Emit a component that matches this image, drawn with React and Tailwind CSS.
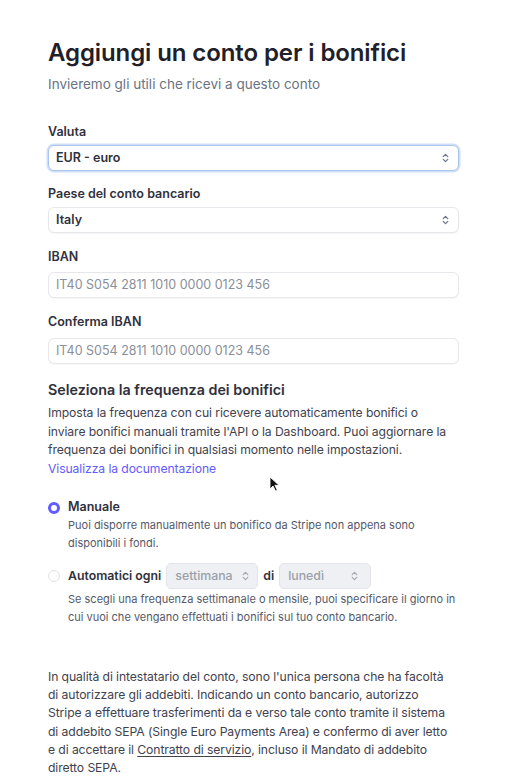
import React from "react";

function Chevrons({ className = "" }) {
  return (
    <svg width="7" height="10" viewBox="0 0 7 10" fill="none" className={className}>
      <path d="M1.2 3.6 L3.5 1.3 L5.8 3.6" stroke="currentColor" strokeWidth="1.2" strokeLinecap="round" strokeLinejoin="round" />
      <path d="M1.2 6.4 L3.5 8.7 L5.8 6.4" stroke="currentColor" strokeWidth="1.2" strokeLinecap="round" strokeLinejoin="round" />
    </svg>
  );
}

function Label({ children, className = "" }) {
  return <div className={"text-[12.5px] font-semibold text-[#30313d] leading-[16px] " + className}>{children}</div>;
}

function Select({ value, focused }) {
  return (
    <div
      className={
        "mt-[5px] h-[26px] rounded-[6px] bg-white flex items-center justify-between pl-[7px] pr-[9px] " +
        (focused
          ? "border border-[#a9c6ef] shadow-[0_0_0_1.5px_#cfdff6]"
          : "border border-[#e6e6eb] shadow-[0_1px_1px_rgba(0,0,0,0.04)]")
      }
    >
      <span className="text-[12.5px] font-semibold text-[#30313d]">{value}</span>
      <Chevrons className="text-[#6a7383]" />
    </div>
  );
}

function Input({ placeholder, className = "" }) {
  return (
    <div className={"h-[26px] rounded-[6px] bg-white border border-[#e6e6eb] shadow-[0_1px_1px_rgba(0,0,0,0.03)] flex items-center pl-[7px] " + className}>
      <span className="text-[12.5px] text-[#8a8f98]">{placeholder}</span>
    </div>
  );
}

export default function App() {
  return (
    <div
      className="relative w-[531px] h-[777px] bg-white overflow-hidden"
      style={{ fontFamily: "Inter, 'Noto Sans', sans-serif" }}
    >
      <div className="pl-[48px] pr-[72px] pt-[39px]">
        <h1 className="text-[24px] font-semibold text-[#1f2029] leading-[28px] tracking-[-0.1px]">
          Aggiungi un conto per i bonifici
        </h1>
        <p className="mt-[8px] text-[13.5px] text-[#6a7383] leading-[18px]">
          Invieremo gli utili che ricevi a questo conto
        </p>

        <div className="mt-[31px]">
          <Label>Valuta</Label>
          <Select value="EUR - euro" focused />
        </div>
        <div className="mt-[15px]">
          <Label>Paese del conto bancario</Label>
          <Select value="Italy" />
        </div>
        <div className="mt-[16px]">
          <Label>IBAN</Label>
          <Input placeholder="IT40 S054 2811 1010 0000 0123 456" className="mt-[7px]" />
        </div>
        <div className="mt-[16px]">
          <Label>Conferma IBAN</Label>
          <Input placeholder="IT40 S054 2811 1010 0000 0123 456" className="mt-[8px]" />
        </div>

        <div className="mt-[16px]">
          <h2 className="text-[14.3px] font-semibold text-[#30313d] leading-[20px]">
            Seleziona la frequenza dei bonifici
          </h2>
          <p className="mt-[4px] text-[12.2px] text-[#41424e] leading-[18.5px] whitespace-nowrap tracking-[-0.1px]">
            Imposta la frequenza con cui ricevere automaticamente bonifici o
            <br />
            inviare bonifici manuali tramite l'API o la Dashboard. Puoi aggiornare la
            <br />
            frequenza dei bonifici in qualsiasi momento nelle impostazioni.
            <br />
            <span className="text-[#635bff]">Visualizza la documentazione</span>
          </p>
        </div>

        <div className="mt-[21px] flex gap-[8px]">
          <div className="mt-[3px] w-[12px] h-[12px] rounded-full border-[3.5px] border-[#635bff] bg-white shrink-0" />
          <div>
            <div className="text-[12.5px] font-semibold text-[#30313d] leading-[16px]">Manuale</div>
            <p className="mt-[1px] text-[11px] text-[#545969] leading-[18px] whitespace-nowrap">
              Puoi disporre manualmente un bonifico da Stripe non appena sono
              <br />
              disponibili i fondi.
            </p>
          </div>
        </div>

        <div className="mt-[11px] flex gap-[8px]">
          <div className="mt-[7px] w-[12px] h-[12px] rounded-full border border-[#e3e4e8] bg-white shrink-0" />
          <div>
            <div className="flex items-center gap-[5px]">
              <span className="text-[12.3px] font-semibold text-[#30313d]">Automatici ogni</span>
              <div className="w-[92px] h-[26px] rounded-[5px] bg-[#eef0f4] border border-[#e3e5ea] flex items-center justify-between pl-[8px] pr-[8px]">
                <span className="text-[12.3px] font-medium text-[#9aa0aa]">settimana</span>
                <Chevrons className="text-[#a3a8b1]" />
              </div>
              <span className="text-[12.3px] font-semibold text-[#30313d]">di</span>
              <div className="w-[92px] h-[26px] rounded-[5px] bg-[#eef0f4] border border-[#e3e5ea] flex items-center justify-between pl-[8px] pr-[12px]">
                <span className="text-[12.3px] font-medium text-[#9aa0aa]">lunedì</span>
                <Chevrons className="text-[#a3a8b1]" />
              </div>
            </div>
            <p className="mt-[2px] text-[11px] text-[#545969] leading-[17.5px] whitespace-nowrap">
              Se scegli una frequenza settimanale o mensile, puoi specificare il giorno in
              <br />
              cui vuoi che vengano effettuati i bonifici sul tuo conto bancario.
            </p>
          </div>
        </div>

        <p className="mt-[42px] text-[12.2px] text-[#41424e] leading-[18.2px] whitespace-nowrap tracking-[-0.1px]">
          In qualità di intestatario del conto, sono l'unica persona che ha facoltà
          <br />
          di autorizzare gli addebiti. Indicando un conto bancario, autorizzo
          <br />
          Stripe a effettuare trasferimenti da e verso tale conto tramite il sistema
          <br />
          di addebito SEPA (Single Euro Payments Area) e confermo di aver letto
          <br />
          e di accettare il <span className="underline underline-offset-2">Contratto di servizio</span>, incluso il
          Mandato di addebito
          <br />
          diretto SEPA.
        </p>
      </div>

      <svg className="absolute left-[269px] top-[476px]" width="11" height="16" viewBox="0 0 11 16">
        <path d="M1 1 L1 13 L4 10 L6.5 15 L8.3 14.2 L5.9 9.3 L10 9.3 Z" fill="#111" stroke="#fff" strokeWidth="0.8" />
      </svg>
    </div>
  );
}
